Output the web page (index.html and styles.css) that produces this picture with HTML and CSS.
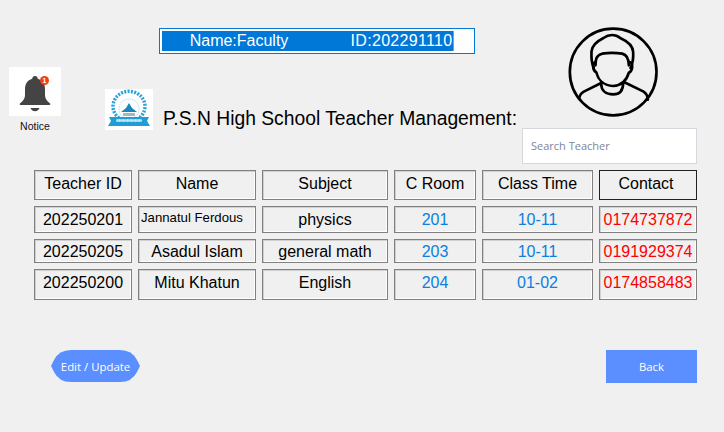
FILE: index.html
```html
<!DOCTYPE html>
<html lang="en">
<head>
  <meta charset="UTF-8" />
  <title>Teacher Management</title>
  <link rel="stylesheet" href="styles.css">
</head>
<body>
  <div class="top">
    <div class="notice">
      <div class="bell-box">
        <svg width="52" height="49" viewBox="0 0 52 49">
          <path d="M26 9c-1.700 0-2.600 1.200-2.800 2.800-4.800 1.400-7.200 5.200-7.200 10.200v6c0 3.500-1.800 5.800-4.800 8.200-.8.700-.8 1.800.4 1.800h28.800c1.200 0 1.200-1.100.4-1.800-3-2.400-4.800-4.700-4.800-8.200v-6c0-5-2.400-8.800-7.200-10.200-.2-1.600-1.100-2.800-2.800-2.800z" fill="#444"/>
          <path d="M21.500 41h9c-.5 2-2.300 3.200-4.500 3.200s-4-1.200-4.500-3.200z" fill="#444"/>
        </svg>
        <span class="badge">1</span>
      </div>
      <div class="notice-label">Notice</div>
    </div>

    <div class="logo">
      <svg width="48" height="41" viewBox="0 0 48 41">
        <path d="M14 29a16 15 0 1 1 20 0" fill="none" stroke="#2ba3d8" stroke-width="3.500" stroke-dasharray="2 1.300"/>
        <circle cx="24" cy="20" r="10" fill="none" stroke="#a9d8ee" stroke-width="1" stroke-dasharray="1.500 1"/>
        <path d="M24 14l3 5 5 4h-16l5-4z" fill="#1c86bd"/>
        <path d="M18 24h12v3h-12z" fill="#9fb8c6"/>
        <path d="M4 28h40l-2 4 3 5h-42l3-5z" fill="#1f9ed6"/>
        <path d="M11 30h26v3h-26z" fill="#bfe3f4" stroke="#1f9ed6" stroke-width=".500" stroke-dasharray="3 1"/>
      </svg>
    </div>

    <div class="middle">
      <div class="user-box"><span class="selected">      Name:Faculty              <span class="user-id">ID:202291110</span></span></div>
      <h1 class="title">P.S.N High School Teacher Management:</h1>
    </div>

    <div class="right">
      <svg class="avatar" width="93" height="90" viewBox="170 35 278 270" fill="none" stroke="#000" stroke-width="8" stroke-linecap="round" stroke-linejoin="round">
        <circle cx="308" cy="170" r="130"/>
        <path d="M250 158c-6-12-8-30-7-50 2-22 24-34 36-40 16-12 36-12 50 0 18 8 38 20 39 42 1 18-1 34-8 48"/>
        <path d="M255 150c0-18 2-30 20-35 20-3 40-3 60 0 16 4 20 16 20 35"/>
        <path d="M255 140c-10 2-10 24 3 32 4 18 18 38 50 40 30-2 42-22 47-40 13-6 13-30 2-32"/>
        <path d="M272 205c0 20 14 32 36 32s30-14 30-35"/>
        <path d="M272 203l-52 26c-8 5-14 12-14 22"/>
        <path d="M340 200l58 28c8 5 14 14 14 25"/>
      </svg>
      <div class="search">Search Teacher</div>
    </div>
  </div>

  <div class="teachers">
    <div class="cell">Teacher ID</div>
    <div class="cell">Name</div>
    <div class="cell">Subject</div>
    <div class="cell">C Room</div>
    <div class="cell">Class Time</div>
    <div class="cell cell-dark">Contact</div>

    <div class="cell row-one">202250201</div>
    <div class="cell cell-small">Jannatul Ferdous</div>
    <div class="cell row-one">physics</div>
    <div class="cell row-one blue">201</div>
    <div class="cell row-one blue">10-11</div>
    <div class="cell row-one red">0174737872</div>

    <div class="cell row-two">202250205</div>
    <div class="cell row-two">Asadul Islam</div>
    <div class="cell row-two">general math</div>
    <div class="cell row-two blue">203</div>
    <div class="cell row-two blue">10-11</div>
    <div class="cell row-two red">0191929374</div>

    <div class="cell row-three">202250200</div>
    <div class="cell row-three">Mitu Khatun</div>
    <div class="cell row-three">English</div>
    <div class="cell row-three blue">204</div>
    <div class="cell row-three blue">01-02</div>
    <div class="cell row-three red">0174858483</div>
  </div>

  <div class="actions">
    <button class="btn btn-edit">Edit / Update</button>
    <button class="btn btn-back">Back</button>
  </div>
</body>
</html>
```

FILE: styles.css
```css
html, body {
  height: 100%;
}

body {
  margin: 0;
  background: #f0f0f0;
  color: #000;
  font-family: "Liberation Sans", Arial, sans-serif;
  overflow: hidden;
}

.top {
  display: flex;
  height: 170px;
}

.notice {
  width: 52px;
  margin: 67px 0 0 9px;
}

.bell-box {
  position: relative;
  height: 49px;
  background: #fff;
}

.bell-box svg {
  display: block;
}

.badge {
  position: absolute;
  top: 9px;
  left: 31px;
  width: 9px;
  height: 9px;
  border-radius: 50%;
  background: #f0400f;
  color: #fff;
  font-size: 7px;
  font-weight: bold;
  line-height: 9px;
  text-align: center;
}

.notice-label {
  margin-top: 4px;
  font-size: 10.5px;
  line-height: 13px;
  text-align: center;
  color: #111;
}

.logo {
  width: 48px;
  height: 41px;
  margin: 89px 0 0 44px;
  background: #fff;
}

.logo svg {
  display: block;
}

.middle {
  width: 363px;
  margin-left: 6px;
  padding-top: 28px;
}

.user-box {
  box-sizing: border-box;
  width: 316px;
  height: 26px;
  padding: 2px;
  border: 1px solid #0078d7;
  background: #fff;
  font-size: 16px;
  line-height: 20px;
  white-space: pre;
}

.selected {
  display: inline-block;
  width: 291px;
  height: 20px;
  background: #0078d7;
  border-right: 1px solid #e08a3c;
  color: #fff;
  text-indent: 1px;
}

.user-id {
  letter-spacing: 0.3px;
}

.title {
  margin: 53px 0 0 4px;
  font-size: 19.3px;
  font-weight: normal;
  line-height: 24px;
  white-space: nowrap;
}

.right {
  width: 175px;
  padding-top: 27px;
}

.avatar {
  display: block;
  margin-left: 45px;
}

.search {
  box-sizing: border-box;
  height: 36px;
  margin-top: 11px;
  padding-left: 8px;
  border: 1px solid #d5d9de;
  background: #fff;
  color: #7d8597;
  font-family: "Open Sans", sans-serif;
  font-size: 11px;
  line-height: 34px;
}

.teachers {
  display: grid;
  grid-template-columns: 98px 118px 126px 82px 111px 98px;
  grid-template-rows: 30px 27px 24px 31px;
  gap: 6px;
  margin-left: 34px;
}

.cell {
  box-sizing: border-box;
  display: flex;
  align-items: center;
  justify-content: center;
  padding-bottom: 2px;
  border: 1px solid #808080;
  box-shadow: inset 1px 1px 0 #d0d0d0, inset -1px -1px 0 #fff;
  font-size: 16px;
  white-space: nowrap;
}

.row-one {
  padding-bottom: 0;
}

.row-two {
  padding: 2px 0 0;
}

.row-three {
  padding-bottom: 4px;
}

.cell-dark {
  padding-right: 4px;
  border-color: #222;
  box-shadow: none;
}

.cell-small {
  justify-content: flex-start;
  align-items: flex-start;
  padding: 3px 0 0 2px;
  font-size: 13.2px;
}

.blue {
  color: #0a7fe0;
}

.red {
  color: #f00;
}

.actions {
  display: flex;
  justify-content: space-between;
  align-items: flex-start;
  margin: 50px 27px 0 51px;
}

.btn {
  border: 0;
  padding: 0;
  background: #5b8eff;
  color: #fff;
  font-family: "Open Sans", sans-serif;
  font-size: 11.4px;
}

.btn-edit {
  width: 89px;
  height: 32px;
  clip-path: path("M0 16 L3 10 Q8 0 20 0 H69 Q81 0 86 10 L89 16 L86 22 Q81 32 69 32 H20 Q8 32 3 22 Z");
}

.btn-back {
  width: 91px;
  height: 33px;
}
```
